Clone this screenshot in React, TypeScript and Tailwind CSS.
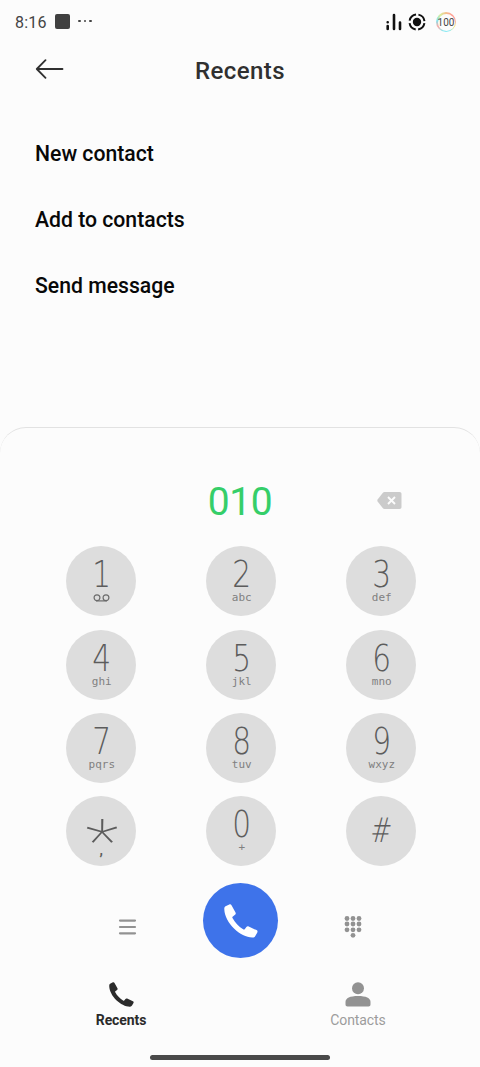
import { ReactNode } from "react";

type Key = {
  digit: string;
  sub?: ReactNode;
};

const Voicemail = () => (
  <svg width="17" height="8" viewBox="0 0 17 8" fill="none" stroke="#6b6b6b" strokeWidth="1.2">
    <circle cx="4" cy="3.7" r="2.9" />
    <circle cx="13" cy="3.7" r="2.9" />
    <path d="M3 6.900H14" />
  </svg>
);

const keys: Key[] = [
  { digit: "1", sub: <Voicemail /> },
  { digit: "2", sub: "abc" },
  { digit: "3", sub: "def" },
  { digit: "4", sub: "ghi" },
  { digit: "5", sub: "jkl" },
  { digit: "6", sub: "mno" },
  { digit: "7", sub: "pqrs" },
  { digit: "8", sub: "tuv" },
  { digit: "9", sub: "wxyz" },
  { digit: "*", sub: "," },
  { digit: "0", sub: "+" },
  { digit: "#" },
];

const actions = ["New contact", "Add to contacts", "Send message"];

const PhoneIcon = ({ className }: { className: string }) => (
  <svg className={className} viewBox="0 0 34 34" fill="currentColor">
    <path d="M1.500 2.300 5.300.5C6.300.1 7 .4 7.500 1.300L11.500 8.600c.5.900.3 1.600-.5 2.200L8.600 12.700c-.4.300-.4.800-.1 1.400 2.500 4.600 6 8.400 10.600 11.200.6.400 1.200.4 1.600-.1l1.700-2.100c.6-.8 1.400-.9 2.300-.5l7.800 3.500c1 .5 1.300 1.300.8 2.300l-2 3.600c-.6 1.100-1.600 1.600-3 1.500C16.500 33.200.8 19.500.3 5.300.2 3.800.6 2.800 1.500 2.300Z" />
  </svg>
);

const StatusBar = () => (
  <div className="flex h-[44px] items-center justify-between pl-[15px] pr-[24px] text-[#444444]">
    <div className="flex items-center">
      <span className="mt-[2px] w-[32px] text-[16px] leading-none tracking-[0.2px]">8:16</span>
      <span className="ml-[8px] -mt-px size-[15px] rounded-[2px] bg-[#404040]" />
      <span className="ml-[8px] -mt-[2px] flex gap-[3px]">
        <i className="size-[2.500px] rounded-full bg-[#444444]" />
        <i className="size-[2.500px] rounded-full bg-[#444444]" />
        <i className="size-[2.500px] rounded-full bg-[#444444]" />
      </span>
    </div>
    <div className="flex items-center">
      <svg width="16" height="18" viewBox="0 0 16 18" stroke="#111111" strokeWidth="2.6" strokeLinecap="round">
        <path d="M1.700 9.200v.1M1.700 13v3M8 2v14M14 9.500V16" />
      </svg>
      <svg className="ml-[6px]" width="18" height="18" viewBox="0 0 18 18" fill="none">
        <circle cx="9" cy="9" r="4.2" fill="#111111" />
        <circle cx="9" cy="9" r="7.5" stroke="#111111" strokeWidth="2" strokeDasharray="9.300 2.481" strokeDashoffset="-1.240" />
      </svg>
      <div className="ml-[10px] flex size-[20px] items-center justify-center rounded-full bg-[conic-gradient(#f5c08c,#ff9d94,#ffa79c,#f6e97a,#7de8f4,#8eeaf2,#fba9a4,#83e4ee,#d9ef9d,#f5c08c)]">
        <div className="flex size-[17px] items-center justify-center rounded-full bg-[#fcfcfc] pt-px text-[10px] leading-none">
          100
        </div>
      </div>
    </div>
  </div>
);

const DialKey = ({ digit, sub }: Key) => {
  if (digit === "*") {
    return (
      <button className="flex size-[70px] flex-col items-center rounded-full bg-[#dddddd] text-[#5c5c5c]">
        <span className="mt-[16px] h-[33px] origin-top scale-x-[1.17] scale-y-[0.92] text-[66px] font-thin leading-[66px]">*</span>
        <span className="text-[14px] font-bold leading-[10px]">{sub}</span>
      </button>
    );
  }
  return (
    <button className="flex size-[70px] flex-col items-center rounded-full bg-[#dddddd] text-[#5c5c5c]">
      <span
        className={
          digit === "#"
            ? "mt-[17px] h-[35px] -skew-x-6 scale-x-[0.75] font-['DejaVu_Sans_Light','DejaVu_Sans'] text-[34px] font-extralight leading-[35px]"
            : "mt-[11px] h-[35px] scale-x-[0.8] font-['DejaVu_Sans_Light','DejaVu_Sans'] text-[37px] font-extralight leading-[36px]"
        }
      >
        {digit}
      </span>
      <span className="flex h-[12px] items-center pl-px font-['DejaVu_Sans_Mono',monospace] text-[11px] leading-[12px] text-[#808080]">
        {sub}
      </span>
    </button>
  );
};

const App = () => {
  return (
    <div className="flex h-[1067px] w-[480px] flex-col overflow-hidden bg-[#fcfcfc] font-[Roboto,sans-serif]">
      <StatusBar />

      {/* Title */}
      <header className="grid h-[53px] grid-cols-[64px_1fr_64px] items-center">
        <svg className="-mt-[3px] ml-[35px]" width="29" height="20" viewBox="0 0 29 20" fill="none" stroke="#303030" strokeWidth="1.800" strokeLinecap="round" strokeLinejoin="round">
          <path d="M27.500 10H2M10.500 1.200 1.800 10l8.700 8.800" />
        </svg>
        <h1 className="text-center text-[24px] font-medium tracking-[0.4px] text-[#303030]">Recents</h1>
      </header>

      {/* Number actions */}
      <div className="flex h-[330px] flex-col pl-[35px] pt-[24px]">
        {actions.map((label) => (
          <button key={label} className="h-[66px] text-left text-[21.200px] font-medium text-[#080808]">
            {label}
          </button>
        ))}
      </div>

      {/* Dial pad */}
      <section className="flex grow flex-col rounded-t-[26px] border-t border-[#e2e2e2]">
        <div className="mt-[50px] grid h-[46px] grid-cols-3 items-center px-[31px]">
          <span className="col-start-2 mt-[2px] text-center text-[39px] leading-none tracking-[-0.5px] text-[#35ce69]">010</span>
          <svg className="-mt-[2px] ml-[67px]" width="25" height="17" viewBox="0 0 25 17">
            <path d="M7.500 0H22.500C23.800 0 24.500.7 24.500 2v13c0 1.300-.7 2-2 2h-15c-.8 0-1.300-.3-1.800-.9L.6 9.500C.1 8.800.1 8.200.6 7.500L5.700.9C6.200.3 6.700 0 7.500 0Z" fill="#cbcbcb" />
            <path d="m11 5 7 7m0-7-7 7" stroke="#fcfcfc" strokeWidth="1.900" />
          </svg>
        </div>

        <div className="mt-[22.300px] grid grid-cols-3 gap-y-[13.400px] pl-[31.300px] pr-[28.700px]">
          {keys.map((k) => (
            <div key={k.digit} className="flex justify-center">
              <DialKey {...k} />
            </div>
          ))}
        </div>

        <div className="mt-[16.700px] flex h-[76px] justify-between px-[118px]">
          <svg className="mt-[36px]" width="19" height="16" viewBox="0 0 19 16" stroke="#929292" strokeWidth="2.200" strokeLinecap="round">
            <path d="M2 1.600h15M2 8h15M2 14.300h15" />
          </svg>
          <button className="flex size-[75px] items-center justify-center rounded-full bg-[#3e73ea] text-white">
            <PhoneIcon className="size-[34px]" />
          </button>
          <svg className="mt-[33px]" width="18" height="22" viewBox="0 0 18 22" fill="#929292">
            {[2.5, 8, 13.8].map((y) =>
              [3, 9, 15].map((x) => <circle key={`${x}-${y}`} cx={x} cy={y} r="2.400" />)
            )}
            <circle cx="9" cy="19.300" r="2.400" />
          </svg>
        </div>

        {/* Bottom tabs */}
        <nav className="flex justify-between pl-[71px] pr-[72px] pt-[22.500px] text-[14px] leading-[20px]">
          <div className="flex w-[100px] flex-col items-center font-bold text-[#2b2b2b]">
            <PhoneIcon className="size-[25px]" />
            <span className="mt-[3px] tracking-[-0.1px]">Recents</span>
          </div>
          <div className="flex w-[100px] flex-col items-center text-[#9c9c9c]">
            <svg width="26" height="25" viewBox="0 0 26 25" fill="#929292">
              <circle cx="13" cy="6.300" r="6" />
              <path d="M.5 20C.5 16 5 14 13 14s12.500 2 12.500 6v2.500c0 1.300-.8 2-2 2h-21c-1.200 0-2-.7-2-2Z" />
            </svg>
            <span className="mt-[3px] tracking-[-0.1px]">Contacts</span>
          </div>
        </nav>
        <div className="mx-auto mb-[7px] mt-auto h-[5px] w-[180px] rounded-full bg-[#4a4a4a]" />
      </section>
    </div>
  );
};

export default App;
